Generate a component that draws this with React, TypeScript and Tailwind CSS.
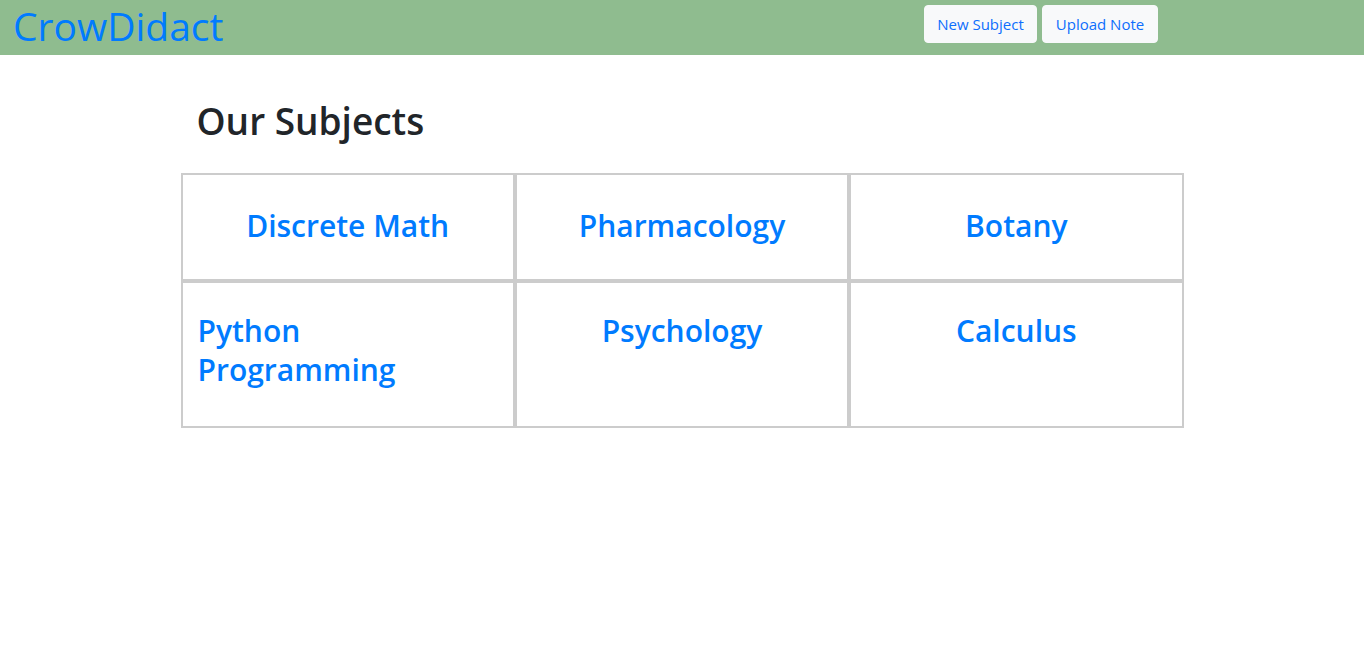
const subjects = [
  { name: "Discrete Math", top: true },
  { name: "Pharmacology", top: true },
  { name: "Botany", top: true },
  { name: "Python Programming", left: true },
  { name: "Psychology" },
  { name: "Calculus" },
]

export default function App() {
  return (
    <div className="min-h-screen bg-white font-['Segoe_UI','Open_Sans',sans-serif] text-[#212529]">
      <nav className="flex h-[55px] items-start bg-[#8fbc8f] pl-[13px] pr-[206px]">
        <a href="#" className="mt-[2px] text-[39px] leading-[48px] text-[#007bff]">
          CrowDidact
        </a>
        <div className="ml-auto mt-[5px] flex gap-[5px]">
          <button className="h-[38px] w-[113px] rounded border border-[#f8f9fa] bg-[#f8f9fa] text-[15px] text-[#0d6efd]">
            New Subject
          </button>
          <button className="h-[38px] w-[116px] rounded border border-[#f8f9fa] bg-[#f8f9fa] text-[15px] text-[#0d6efd]">
            Upload Note
          </button>
        </div>
      </nav>

      <main className="mx-auto w-[1003px]">
        <h1 className="mt-[42px] mb-[28px] px-4 text-[37px] font-semibold leading-[48px]">Our Subjects</h1>
        <div className="grid grid-cols-3">
          {subjects.map((s) => (
            <div
              key={s.name}
              className={`border-2 border-[#cccccc] px-[15px] ${s.top ? "pt-[32px] pb-[26px]" : "py-[29px]"} ${
                s.left ? "text-left" : "text-center"
              }`}
            >
              <h2 className="mb-2 text-[30px] font-semibold leading-[38.4px] text-[#007bff]">{s.name}</h2>
            </div>
          ))}
        </div>
      </main>
    </div>
  )
}
